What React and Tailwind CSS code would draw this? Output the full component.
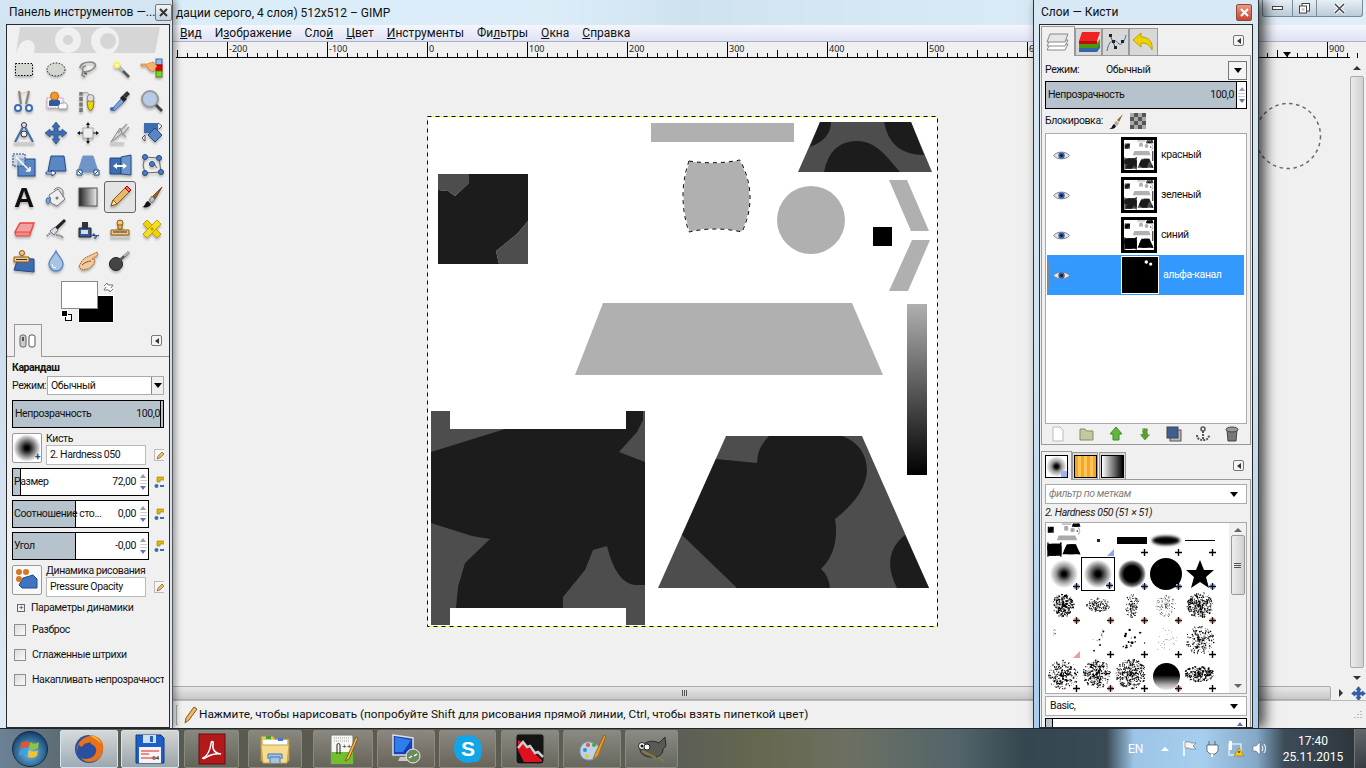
import React from 'react';

const BLUE = '#3d6cb0';
const BLUEL = '#7fa3d6';

// seeded noise for the brush previews
const scatter = (seed, n, cx, cy, rx, ry, maxR) => {
  let s = seed;
  const rnd = () => { s = (s * 9301 + 49297) % 233280; return s / 233280; };
  const out = [];
  for (let i = 0; i < n; i++) {
    const a = rnd() * Math.PI * 2;
    const d = Math.pow(rnd(), 0.7);
    out.push([cx + Math.cos(a) * d * rx, cy + Math.sin(a) * d * ry, 0.3 + rnd() * maxR]);
  }
  return out;
};

const Tool = ({ children }) => <svg width="24" height="24" viewBox="0 0 24 24" className="drop-shadow-[0_2px_1px_rgba(0,0,0,0.25)]">{children}</svg>;

const toolIcons = [
  // row 1
  <Tool key="rect"><rect x="3.5" y="6.5" width="17" height="12" fill="#d3d7cf" stroke="#000" strokeDasharray="1.5 1.5" /></Tool>,
  <Tool key="ell"><ellipse cx="12" cy="12.5" rx="9" ry="6.5" fill="#d3d7cf" stroke="#111" strokeDasharray="1.5 1.5" /></Tool>,
  <Tool key="lasso"><path d="M4 11c0-4 5-6 10-6s7 3 4 6-9 5-11 3 0-5 3-5M7 14l-1 4 3 2" fill="none" stroke="#8a8a80" strokeWidth="1.6" /><path d="M8 16l3 1" stroke="#555" strokeWidth="1.5" /></Tool>,
  <Tool key="wand"><path d="M11 10l10 10" stroke="#555" strokeWidth="2.6" /><path d="M11 10l4 4" stroke="#bbb" strokeWidth="2.6" /><circle cx="9" cy="8" r="3.4" fill="#fcf05a" /><circle cx="9" cy="8" r="1.4" fill="#fff" /></Tool>,
  <Tool key="csel"><rect x="16" y="2" width="6" height="6" fill="#9db8dd" stroke={BLUE} /><rect x="16" y="8" width="6" height="6" fill="#e00" stroke="#900" /><rect x="16" y="14" width="6" height="6" fill="#7ed321" stroke="#4a8a10" /><path d="M1 7h6l6-2 4 4-4 6-5-3-1-3H1z" fill="#f6b26b" stroke="#d9730d" strokeDasharray="1 .6" /></Tool>,
  // row 2
  <Tool key="sc"><path d="M9 15L7 2M14 15l3-13" stroke="#888" strokeWidth="2.2" /><path d="M8 3l1 2 8-3" fill="none" stroke="#e89020" strokeDasharray="1 1" /><circle cx="6" cy="19" r="3" fill="#fff" stroke={BLUE} strokeWidth="2" /><circle cx="17" cy="19" r="3" fill="#fff" stroke={BLUE} strokeWidth="2" /></Tool>,
  <Tool key="fg"><path d="M3 9h16v10H3z" fill="#f3f3ef" stroke="#c98acb" strokeDasharray="1.4 .8" /><path d="M5 17v-5l3-2h5l3 2v5z" fill="#2f5a9c" /><circle cx="10.5" cy="7" r="4" fill="#ee9a33" stroke="#c46f10" /><path d="M15 20a4 4 0 014-6 3 3 0 014 4v2z" fill="#fff" stroke="#999" /></Tool>,
  <Tool key="path"><path d="M5 23V3" stroke="#777" strokeWidth="3.5" strokeDasharray="4 1.5" /><path d="M5 5c6-3 9-1 9 5" fill="none" stroke="#888" /><path d="M11 12h7l-1 7-2.500 3-2.500-3z" fill="#edd400" stroke="#8f7b00" /><circle cx="14.500" cy="9" r="3.500" fill="#ddd" stroke="#888" /></Tool>,
  <Tool key="pick"><path d="M4 20l9-10 3 3-10 9z" fill={BLUEL} stroke={BLUE} /><path d="M12 9l3-3 4 4-3 3z" fill="#222" /><path d="M15 6l4-4 3 3-4 4z" fill="#333" /><circle cx="4" cy="20" r="2" fill={BLUE} /></Tool>,
  <Tool key="zoom"><circle cx="10" cy="10" r="8" fill="#b6cbe6" stroke="#999" strokeWidth="2" /><path d="M16 16l6 6" stroke="#444" strokeWidth="3" /></Tool>,
  // row 3
  <Tool key="meas"><circle cx="12" cy="4" r="2.500" fill="none" stroke="#333" /><path d="M11 6L3 21M13 6l8 15" stroke={BLUE} strokeWidth="2" /><circle cx="12" cy="13" r="3" fill="#eee" stroke="#333" /><path d="M2 22h20" stroke="#ccc" strokeWidth="2" /></Tool>,
  <Tool key="move"><path d="M12 1l4 5h-2v4h4V8l5 4-5 4v-2h-4v4h2l-4 5-4-5h2v-4H6v2l-5-4 5-4v2h4V6H8z" fill="#3d6cb0" stroke="#204a87" strokeWidth=".7" /></Tool>,
  <Tool key="align"><rect x="7" y="7" width="10" height="10" fill="#eee" stroke="#aaa" /><path d="M12 1l2 3h-4zM12 23l-2-3h4zM1 12l3-2v4zM23 12l-3 2v-4z" fill="#111" /><path d="M12 4v3M12 17v3M4 12h3M17 12h3" stroke="#111" /></Tool>,
  <Tool key="crop"><path d="M3 21l9-14 2 5z" fill="#ddd" stroke="#888" /><path d="M10 12l9-9M14 14l7-8M14 12l4 4" stroke="#9a9a9a" strokeWidth="1.4" /><path d="M2 22h14" stroke="#ccc" strokeWidth="2" /></Tool>,
  <Tool key="rot"><rect x="4" y="2" width="14" height="10" fill="#3d6cb0" /><path d="M8 14l7-7 7 7-7 7z" fill="#5b86c4" stroke="#204a87" /><path d="M18 2l4 3-3 3M2 17l3-3v6z" fill="#fff" stroke="#555" /></Tool>,
  // row 4
  <Tool key="scale"><rect x="6" y="6" width="17" height="17" fill="#5b86c4" stroke="#204a87" /><rect x="1" y="1" width="12" height="12" fill="#cfdcee" fillOpacity=".55" stroke="#204a87" strokeDasharray="2 1" /><path d="M4 4l14 14M18 18v-4M18 18h-4" stroke="#fff" strokeWidth="1.6" /></Tool>,
  <Tool key="shear"><path d="M7 3h13l2 15H4z" fill="#5b86c4" stroke="#204a87" /><path d="M2 19h6v-2l4 3-4 3v-2H2z" fill="#fff" stroke="#204a87" /></Tool>,
  <Tool key="persp"><path d="M7 3h10l5 16H2z" fill="#6f94c8" stroke="#6f94c8" /><path d="M1 17h5v5H1zM18 17h5v5h-5z" fill="#fff" stroke="#204a87" /><path d="M2 18l3 3M22 18l-3 3" stroke="#204a87" /></Tool>,
  <Tool key="flip"><path d="M2 5h11v16H2z" fill="#3d6cb0" stroke="#204a87" /><path d="M13 4l10-2v20l-10-1z" fill="#6f94c8" stroke="#204a87" /><path d="M5 13l4-3v2h6v-2l4 3-4 3v-2H9v2z" fill="#fff" /></Tool>,
  <Tool key="cage"><path d="M5 4l14 1 2 14-16 1-2-8z" fill="none" stroke="#666" /><path d="M10 12l4-2 3 5" fill="none" stroke="#666" /><g fill="#4d7cc0" stroke="#204a87"><circle cx="5" cy="4" r="2.500" /><circle cx="19" cy="5" r="2.500" /><circle cx="21" cy="19" r="2.500" /><circle cx="5" cy="20" r="2.500" /><circle cx="12" cy="11" r="2.500" /></g></Tool>,
  // row 5
  <svg key="txt" width="32" height="32" viewBox="0 0 32 32" className="drop-shadow-[0_2px_1px_rgba(0,0,0,0.25)]"><text x="16" y="26" textAnchor="middle" fontFamily="Liberation Sans" fontWeight="700" fontSize="28" fill="#111">A</text></svg>,
  <Tool key="bucket"><path d="M5 10l9-6 7 10-8 7-6-3z" fill="#eee" stroke="#777" /><path d="M3 13c-2 3 0 6 1 6 2 0 1-4 3-6z" fill="#7fa3d6" stroke={BLUE} /><path d="M10 5a5 5 0 019 1v6" fill="none" stroke="#777" /><circle cx="13" cy="13" r="1.500" fill="#777" /></Tool>,
  <Tool key="blend"><defs><linearGradient id="blendg"><stop offset="0" stopColor="#222" /><stop offset="1" stopColor="#eee" /></linearGradient></defs><rect x="3" y="3" width="18" height="18" fill="url(#blendg)" stroke="#555" /></Tool>,
  <Tool key="pencil"><path d="M3 21l2-6L17 3l4 4L9 19z" fill="#e9b96e" stroke="#8f5902" /><path d="M3 21l2-6 4 4z" fill="#f5e3c0" stroke="#8f5902" /><path d="M17 3l4 4 2-2-4-4z" fill="#ef6d6d" stroke="#a40000" /></Tool>,
  <Tool key="brush"><path d="M2 22c3 0 3-5 6-6l3 3c-1 3-5 4-9 3z" fill="#111" /><path d="M9 15l3-4 3 3-3 4z" fill="#bbb" stroke="#777" /><path d="M13 11l9-9-7 12z" fill="#a0622a" stroke="#7a4a1a" /></Tool>,
  // row 6
  <Tool key="erase"><path d="M3 15L8 6h14l-4 11H4z" fill="#f2a0a0" stroke="#ef4444" strokeWidth="1.400" /><path d="M3 15h15v4H4z" fill="#ee8a8a" stroke="#ef4444" /></Tool>,
  <Tool key="air"><path d="M8 13L20 2l2 2L11 15z" fill="#222" /><path d="M6 14l5-4 3 3-4 5z" fill="#ddd" stroke="#777" /><path d="M12 18c4 0 6 1 7 3" fill="none" stroke="#999" strokeWidth="2" /><path d="M3 19l4-4" stroke="#5b86c4" strokeWidth="2" strokeDasharray="1.500 1" /></Tool>,
  <Tool key="ink"><path d="M3 11h12v9H3z" fill="#2f5a9c" stroke="#222" /><rect x="6" y="5" width="6" height="6" fill="#333" /><rect x="5" y="13" width="7" height="4" fill="#ddd" /><path d="M15 19l3-2 2 3 3-2M18 21h3" stroke="#3d6cb0" strokeWidth="1.500" strokeDasharray="2 1" /></Tool>,
  <Tool key="clone"><circle cx="12" cy="6" r="3" fill="#f0c98a" stroke="#8f5902" /><rect x="10" y="8" width="4" height="4" fill="#e9b96e" stroke="#8f5902" /><path d="M3 13h18v5H3z" fill="#f0c98a" stroke="#8f5902" /><path d="M5 15h14" stroke="#333" /><path d="M2 20h20" stroke="#ccc" strokeWidth="2" /></Tool>,
  <Tool key="heal"><path d="M3 7l4-4 14 14-4 4z" fill="#edd400" stroke="#c4a000" /><path d="M21 7l-4-4L3 17l4 4z" fill="#f5dd20" stroke="#c4a000" /><path d="M10 12l2-2 2 2-2 2z" fill="#c4a000" /></Tool>,
  // row 7
  <Tool key="pclone"><path d="M6 9l16 1v13L2 21z" fill="#3d6cb0" stroke="#204a87" /><circle cx="10" cy="4" r="2.500" fill="#f0c98a" stroke="#8f5902" /><path d="M2 8h15v5H2z" fill="#f0c98a" stroke="#8f5902" /><path d="M4 10.500h11" stroke="#333" /></Tool>,
  <Tool key="drop"><path d="M12 2c2 5 7 8 7 13a7 7 0 01-14 0c0-5 5-8 7-13z" fill="#a9c3e4" stroke="#5b86c4" strokeWidth="1.300" /><path d="M8 15a4 4 0 004 4" stroke="#fff" fill="none" /></Tool>,
  <Tool key="smudge"><path d="M3 18c2-6 5-9 8-10l10-5 1 3-6 4 3 1c0 3-3 7-7 9l-6 1z" fill="#edc9a4" stroke="#b5651d" strokeDasharray="2 .6" /><path d="M6 16c2-2 6-4 9-4" stroke="#8f5902" fill="none" /></Tool>,
  <Tool key="dodge"><circle cx="8" cy="15" r="6.500" fill="#444" stroke="#222" /><path d="M12 11l9-8" stroke="#555" strokeWidth="2.500" /><path d="M16 7l5-4" stroke="#bbb" strokeWidth="2" /></Tool>,
];

// outline of the floating selection, used for the fill and the marching ants
const BLOB = 'M689 161Q715 165 740 160Q759 196 742 232Q715 226 689 232Q677 196 689 161Z';

// the image itself; coordinates are screen pixels of the reference
function Artwork({ dark = '#1c1c1c', mid = '#4d4d4d', light = '#b0b0b0' }) {
  return (
    <>
      <rect x="651" y="123" width="143" height="19" fill={light} />
      <path d="M820 122H911L932 172H798Z" fill={mid} />
      <path d="M820 122H831Q831 139 810 147ZM884 122H911L924 155Q890 155 884 122ZM824 172Q830 141 857 141Q873 141 887 157L900 172Z" fill={dark} />
      <path d="M438 174H469V183L455 196L448 191L438 190ZM528 221V264H499L496 251L517 234Z" fill={mid} />
      <path d="M469 174H528V221L517 234L496 251L499 264H438V190L448 191L455 196L469 183Z" fill={dark} />
      <circle cx="811" cy="220" r="34" fill={light} />
      <path d={BLOB} fill={light} />
      <rect x="873" y="227" width="19" height="19" fill="#000" />
      <path d="M889 180H907L929 231H911ZM912 240H930L908 291H889Z" fill={light} />
      <path d="M603 303H852L883 375H575Z" fill={light} />
      <path d="M431 411H450V429H626V411H645V625H626V608H450V625H431Z" fill={mid} />
      <path d="M431 452L505 429H626V411H643V420L637 432L619 452L645 462V585H635Q616 583 607 546L593 550L585 570L563 597V608H456L458 587L465 563L490 539L472 536L431 523Z" fill={dark} />
      <path d="M726 436H862L929 588H658Z" fill={mid} />
      <path d="M769 436Q757 448 757 463L716 459L682 535L737 588H830Q829 576 821 569Q840 550 835 519Q866 495 867 470Q866 445 842 436ZM905 535Q880 555 897 588H929Z" fill={dark} />
    </>
  );
}

function Gradient() {
  return (
    <>
      <defs>
        <linearGradient id="ramp" x1="0" y1="0" x2="0" y2="1">
          <stop offset="0" stopColor="#b0b0b0" />
          <stop offset="1" stopColor="#000" />
        </linearGradient>
      </defs>
      <rect x="907" y="304" width="20" height="171" fill="url(#ramp)" />
    </>
  );
}

const Thumb = ({ dark, mid, light, alpha }) => (
  <svg width="36" height="36" viewBox="427 116 511 512" className="block border-[3px] border-black bg-white shrink-0">
    {alpha ? (
      <>
        <rect x="427" y="116" width="511" height="512" fill="#000" />
        <circle cx="790" cy="150" r="30" fill="#fff" />
        <circle cx="865" cy="185" r="28" fill="#fff" />
      </>
    ) : (
      <>
        <Artwork dark={dark} mid={mid} light={light} />
        <rect x="907" y="304" width="20" height="171" fill="#333" />
      </>
    )}
  </svg>
);

const Eye = () => (
  <svg width="17" height="11" viewBox="0 0 17 11">
    <path d="M.5 5.500C4 1 13 1 16.500 5.500 13 10 4 10 .5 5.500z" fill="#e8e8e8" stroke="#888" />
    <circle cx="8.500" cy="5.500" r="3.200" fill="#2f5fa8" />
    <circle cx="8.500" cy="5.500" r="1.300" fill="#111" />
  </svg>
);

const Spin = () => (
  <div className="w-[8px] h-full flex flex-col items-center justify-center gap-[2px]">
    <span className="w-0 h-0 border-x-[3px] border-x-transparent border-b-[4px] border-b-[#8f9bb8]" />
    <span className="w-[7px] h-px bg-[#ccc]" />
    <span className="w-[7px] h-px bg-[#ccc]" />
    <span className="w-0 h-0 border-x-[3px] border-x-transparent border-t-[4px] border-t-[#5f72b0]" />
  </div>
);

const Caret = () => <span className="w-0 h-0 border-x-[4px] border-x-transparent border-t-[5px] border-t-black" />;

const LinkIcon = () => (
  <svg width="12" height="14" viewBox="0 0 12 14" className="shrink-0">
    <path d="M3 5V2h8v3H6v2H3z" fill="#e4b800" stroke="#8f7b00" strokeWidth=".6" />
    <circle cx="2.500" cy="11" r="2" fill="#3d6cb0" />
    <rect x="6" y="10" width="5" height="2" fill="#3d6cb0" />
  </svg>
);

const EditBtn = () => (
  <div className="w-[12px] h-[12px] border border-[#bbb] bg-[#f6f6f6] flex items-center justify-center shrink-0">
    <svg width="9" height="9" viewBox="0 0 9 9"><path d="M1 8l1-3 4-4 2 2-4 4z" fill="#e9b96e" stroke="#6b4a10" strokeWidth=".6" /></svg>
  </div>
);

const TabMenu = () => (
  <div className="w-[11px] h-[11px] rounded-[2px] border border-[#777] bg-[#f4f4f4] flex items-center justify-center">
    <span className="w-0 h-0 border-y-[3px] border-y-transparent border-r-[4px] border-r-[#333]" />
  </div>
);

function ToolSlider({ label, value, fill }) {
  return (
    <div className="flex items-center gap-[5px]">
      <div className="relative w-[137px] h-[28px] border border-black bg-white flex items-center pr-[1px] shrink-0">
        <div className={`absolute left-0 top-0 bottom-0 bg-[#b6c2cc] border-r border-black ${fill}`} />
        <span className="relative flex-1 pl-[1px] text-[#111] whitespace-nowrap">{label}</span>
        <span className="relative text-[#111] pr-[3px]">{value}</span>
        <span className="relative h-full flex items-center"><Spin /></span>
      </div>
      <LinkIcon />
    </div>
  );
}

const Check = ({ label }) => (
  <div className="flex items-center gap-[6px] h-[25px] text-[#111] whitespace-nowrap">
    <span className="w-[12px] h-[12px] border border-[#8e8f8f] bg-[linear-gradient(135deg,#dcdcdc,#fafafa)] shrink-0" />
    {label}
  </div>
);

function Toolbox() {
  return (
    <div className="absolute left-0 top-0 w-[173px] h-[728px] flex flex-col pl-[6px] pr-[2px] bg-[linear-gradient(180deg,#d3e4f2,#cbdcec_40%,#dfeaf4)] border-r border-[#555] shadow-[3px_0_6px_rgba(0,0,0,0.35)] z-10">
      <div className="h-[24px] shrink-0 flex items-center justify-between pl-[3px] pr-[1px]">
        <span className="text-[12px] text-[#111] whitespace-nowrap">Панель инструментов —...</span>
        <span className="w-[17px] h-[17px] border border-[#777] rounded-[2px] bg-[linear-gradient(180deg,#f0f4f8,#c8d0d8)] flex items-center justify-center shrink-0">
          <svg width="9" height="9" viewBox="0 0 9 9"><path d="M1 1l7 7M8 1L1 8" stroke="#333" strokeWidth="2" /></svg>
        </span>
      </div>
      <div className="flex-1 border border-[#2a2a2a] bg-[#f0f0f0] flex flex-col overflow-hidden text-[#111] text-[10.5px] tracking-[-0.4px]">
        <svg width="162" height="27" viewBox="0 0 162 27" className="shrink-0 mt-[1px]">
          <path d="M13 1H153L148 27H9Z" fill="#d6d6d6" />
          <path d="M9 27Q13 13 22 14Q30 16 27 27Z" fill="#f0f0f0" />
          <circle cx="61" cy="14" r="13" fill="#f0f0f0" />
          <circle cx="61" cy="14" r="5" fill="#d6d6d6" />
          <circle cx="98" cy="15" r="14" fill="#f0f0f0" />
          <circle cx="101" cy="15" r="8" fill="#d6d6d6" />
        </svg>
        <div className="grid grid-cols-[repeat(5,32px)] auto-rows-[32px] pl-[1px] shrink-0">
          {toolIcons.map((icon, i) => (
            <div key={i} className={`flex items-center justify-center ${i === 23 ? 'bg-[#e4e4e4] border border-[#666] rounded-[3px]' : ''}`}>{icon}</div>
          ))}
        </div>
        {/* colour swatches */}
        <div className="h-[42px] mt-[4px] shrink-0 flex justify-center">
          <div className="relative w-[56px] h-[42px] ml-[1px]">
            <div className="absolute left-[17px] top-[14px] w-[36px] h-[28px] bg-black border border-white" />
            <div className="absolute left-0 top-0 w-[37px] h-[28px] bg-white border border-[#888]" />
            <div className="absolute left-[4px] top-[33px] w-[7px] h-[7px] bg-white border border-black" />
            <div className="absolute left-0 top-[29px] w-[7px] h-[7px] bg-black border border-white" />
            <svg width="13" height="13" viewBox="0 0 13 13" className="absolute left-[41px] top-0"><path d="M2 5l3-3 1 2h5l-2 3M11 8l-3 3-1-2H2l2-3" fill="#fff" stroke="#777" /></svg>
          </div>
        </div>
        {/* tool options */}
        <div className="flex items-end justify-between h-[33px] shrink-0 pr-[7px] relative">
          <div className="ml-[7px] w-[28px] h-[33px] bg-[#f0f0f0] border border-[#999] border-b-0 flex items-center justify-center relative top-px">
            <svg width="18" height="16" viewBox="0 0 18 16"><rect x="1" y="2" width="6" height="12" rx="2" fill="#ccc" stroke="#666" /><rect x="10" y="2" width="6" height="12" rx="2" fill="#fff" stroke="#555" /><rect x="3" y="4" width="2" height="4" fill="#555" /></svg>
          </div>
          <div className="mb-[10px]"><TabMenu /></div>
        </div>
        <div className="flex-1 border-t border-[#999] pl-[5px]">
          <div className="w-[152px] h-full overflow-hidden">
            <div className="font-bold leading-[15px] mt-[3px] h-[16px]">Карандаш</div>
            <div className="flex items-center h-[19px]">
              <span className="w-[35px] shrink-0 whitespace-nowrap">Режим:</span>
              <div className="flex-1 flex h-[19px] border border-[#aaa] bg-white items-center pl-[3px]">
                <span className="flex-1">Обычный</span>
                <span className="w-[12px] h-full border-l border-[#888] bg-[#f0f0f0] flex items-center justify-center"><Caret /></span>
              </div>
            </div>
            <div className="mt-[5px] h-[28px] border border-black bg-[#b6c2cc] flex items-center px-[2px] relative">
              <span className="flex-1">Непрозрачность</span>
              <span className="pr-[1px]">100,0</span>
              <span className="absolute right-[2px] top-0 bottom-0 w-px bg-black" />
            </div>
            <div className="flex mt-[5px] h-[31px] gap-[4px]">
              <div className="relative w-[30px] h-[30px] border border-[#999] rounded-[2px] bg-[radial-gradient(circle,#000_10%,#fff_70%)] shrink-0">
                <span className="absolute right-[1px] bottom-[1px] text-[10px] leading-[8px] font-bold text-[#2a3f9c]">+</span>
              </div>
              <div className="flex flex-col flex-1">
                <span className="leading-[11px] mb-[1px]">Кисть</span>
                <div className="flex items-center gap-[8px]">
                  <div className="w-[100px] h-[20px] border border-[#bbb] bg-white pl-[3px] flex items-center">2. Hardness 050</div>
                  <EditBtn />
                </div>
              </div>
            </div>
            <div className="flex flex-col gap-[4px] mt-[4px]">
              <ToolSlider label="Размер" value="72,00" fill="w-[8px]" />
              <ToolSlider label="Соотношение сто..." value="0,00" fill="w-[63px]" />
              <ToolSlider label="Угол" value="-0,00" fill="w-[63px]" />
            </div>
            <div className="flex mt-[5px] h-[31px] gap-[4px]">
              <div className="w-[30px] h-[30px] border border-[#999] rounded-[2px] bg-[#f8f8f8] shrink-0 flex items-center justify-center">
                <svg width="26" height="26" viewBox="0 0 26 26"><path d="M9 11l10-3 4 4v9H8l-3-3z" fill="#3f74c0" stroke="#204a87" /><g fill="#d5781f"><circle cx="5" cy="5" r="3" /><circle cx="12" cy="5" r="3" /><circle cx="5" cy="12" r="3" /></g></svg>
              </div>
              <div className="flex flex-col flex-1">
                <span className="leading-[11px] mb-[1px] whitespace-nowrap">Динамика рисования</span>
                <div className="flex items-center gap-[8px]">
                  <div className="w-[100px] h-[20px] border border-[#bbb] bg-white pl-[3px] flex items-center">Pressure Opacity</div>
                  <EditBtn />
                </div>
              </div>
            </div>
            <div className="flex items-center gap-[6px] mt-[4px] ml-[5px] h-[16px] whitespace-nowrap">
              <span className="w-[8px] h-[8px] border border-[#666] flex items-center justify-center text-[8px] leading-[6px] text-[#2a3f9c]">+</span>
              Параметры динамики
            </div>
            <div className="mt-[1px] ml-[2px]">
              <Check label="Разброс" />
              <Check label="Сглаженные штрихи" />
              <Check label="Накапливать непрозрачность" />
            </div>
          </div>
        </div>
      </div>
    </div>
  );
}

function Corner({ mark }) {
  if (!mark) return null;
  if (mark === 'tb' || mark === 'tr') {
    return <svg width="7" height="7" viewBox="0 0 7 7" className="absolute right-[1px] bottom-[1px]"><path d="M7 0v7H0z" fill={mark === 'tb' ? '#88a6e8' : '#f39a9a'} /></svg>;
  }
  return (
    <svg width="7" height="7" viewBox="0 0 7 7" className="absolute right-[1px] bottom-[1px]">
      {mark !== 'k' && <rect x="1" y="1" width="5" height="5" fill={mark === 'b' ? '#9db4f0' : '#f6a8a8'} />}
      <path d="M3.500 0v7M0 3.500h7" stroke={mark === 'k' ? '#000' : '#111'} strokeWidth="1.400" />
    </svg>
  );
}

const Noise = ({ dots }) => (
  <svg width="34" height="34" viewBox="0 0 34 34">
    {dots.map((d, i) => <circle key={i} cx={d[0]} cy={d[1]} r={d[2]} fill="#000" />)}
  </svg>
);

const brushCells = [
  { mark: null, node: <svg width="34" height="34" viewBox="427 116 511 512"><Artwork dark="#000" mid="#000" light="#aaa" /></svg> },
  { mark: 'tb', node: <span className="w-[3px] h-[3px] bg-[#222]" /> },
  { mark: 'k', node: <span className="w-[30px] h-[7px] bg-black blur-[0.5px]" /> },
  { mark: 'k', node: <span className="w-[28px] h-[9px] rounded-[50%] bg-black blur-[1.5px]" /> },
  { mark: 'k', node: <span className="w-[30px] h-px bg-black" /> },
  { mark: 'b', node: <span className="w-[28px] h-[28px] rounded-full bg-[radial-gradient(circle,#000_10%,#999_40%,#fff_72%)]" /> },
  { mark: 'b', sel: true, node: <span className="w-[28px] h-[28px] rounded-full bg-[radial-gradient(circle,#000_12%,#888_45%,#fff_72%)]" /> },
  { mark: 'b', node: <span className="w-[28px] h-[28px] rounded-full bg-[radial-gradient(circle,#000_40%,#666_58%,#fff_72%)]" /> },
  { mark: 'b', node: <span className="w-[32px] h-[32px] rounded-full bg-black" /> },
  { mark: 'b', node: <svg width="30" height="30" viewBox="0 0 30 30"><path d="M15 1l4 10h10l-8 7 3 11-9-6-9 6 3-11-8-7h10z" fill="#000" /></svg> },
  { mark: 'r', node: <Noise dots={scatter(11, 260, 16, 14, 11, 12, 0.55)} /> },
  { mark: 'r', node: <Noise dots={scatter(23, 150, 17, 14, 12, 7, 0.4)} /> },
  { mark: 'r', node: <Noise dots={scatter(37, 130, 17, 15, 7, 12, 0.35)} /> },
  { mark: 'r', node: <Noise dots={scatter(51, 140, 17, 15, 10, 11, 0.15)} /> },
  { mark: 'r', node: <Noise dots={scatter(73, 330, 17, 14, 13, 13, 0.5)} /> },
  { mark: 'tr', node: <Noise dots={scatter(5, 8, 8, 8, 2, 4, 0.2)} /> },
  { mark: 'k', node: <Noise dots={scatter(91, 10, 17, 15, 12, 12, 0.7)} /> },
  { mark: 'k', node: <Noise dots={scatter(17, 22, 17, 15, 13, 12, 1)} /> },
  { mark: 'k', node: <Noise dots={scatter(29, 26, 17, 15, 13, 13, 0.1)} /> },
  { mark: 'k', node: <Noise dots={scatter(61, 220, 17, 15, 14, 14, 0.5)} /> },
  { mark: 'k', node: <Noise dots={scatter(83, 230, 16, 16, 15, 15, 0.6)} /> },
  { mark: 'r', node: <Noise dots={scatter(97, 300, 16, 15, 14, 14, 0.55)} /> },
  { mark: 'k', node: <Noise dots={scatter(113, 340, 16, 15, 15, 15, 0.5)} /> },
  { mark: 'r', node: <span className="w-[27px] h-[27px] rounded-full bg-[linear-gradient(180deg,#000_45%,#aaa_80%,#eee)]" /> },
  { mark: 'k', node: <Noise dots={scatter(131, 230, 16, 15, 15, 8, 0.6)} /> },
];

function Dock() {
  return (
    <div className="absolute left-[1033px] top-0 w-[226px] h-[728px] flex flex-col pl-[5px] pr-[5px] bg-[linear-gradient(180deg,#d8e8f4,#d0e2f1_50%,#a9cdef)] border-x border-[#333] shadow-[6px_0_12px_rgba(0,0,0,0.7)] z-10">
      <div className="h-[24px] shrink-0 flex items-center justify-between pl-[2px] pr-[1px]">
        <span className="text-[12px] text-[#111]">Слои — Кисти</span>
        <span className="w-[16px] h-[17px] border border-[#8a4a3a] rounded-[2px] bg-[linear-gradient(180deg,#e99a85,#c8452f)] flex items-center justify-center">
          <svg width="9" height="9" viewBox="0 0 9 9"><path d="M1 1l7 7M8 1L1 8" stroke="#fff" strokeWidth="2" /></svg>
        </span>
      </div>
      <div className="flex-1 border border-[#2a2a2a] bg-[#f0f0f0] flex flex-col overflow-hidden text-[10.5px] tracking-[-0.4px] text-[#111]">
        {/* top notebook */}
        <div className="h-[30px] shrink-0 flex items-end pl-[1px] pr-[8px]">
          <div className="w-[34px] h-[30px] border border-[#999] border-b-0 bg-[#f0f0f0] relative top-px flex items-center justify-center">
            <svg width="24" height="22" viewBox="0 0 24 22">
              <path d="M4 13L1 19h18l3-6z" fill="#fff" stroke="#888" /><path d="M4 9L1 15h18l3-6z" fill="#fff" stroke="#888" /><path d="M4 3L1 11h18l3-8z" fill="#e6e6e6" stroke="#888" />
            </svg>
          </div>
          <div className="w-[27px] h-[27px] border border-[#999] border-b-0 bg-[#d8d8d8] flex items-center justify-center">
            <svg width="24" height="22" viewBox="0 0 24 22"><path d="M2 16h18l3-4v5l-3 4H2z" fill="#3465a4" /><path d="M2 12h18l3-4v5l-3 4H2z" fill="#4e9a06" /><path d="M5 1h18l-3 9H2z" fill="#e22" /><path d="M2 10h18v3H2z" fill="#b80f0f" /></svg>
          </div>
          <div className="w-[27px] h-[27px] border border-[#999] border-b-0 bg-[#d8d8d8] flex items-center justify-center">
            <svg width="24" height="23" viewBox="0 0 24 23"><path d="M3 20C5 8 11 8 14 12s7-2 8-8" fill="none" stroke="#3d6cb0" /><path d="M6 4l6 14" stroke="#555" /><g fill="#222"><rect x="5" y="3" width="3" height="3" /><rect x="10" y="15" width="3" height="3" /><rect x="17" y="9" width="3" height="3" /><rect x="8" y="9" width="3" height="3" /></g></svg>
          </div>
          <div className="w-[29px] h-[27px] border border-[#999] border-b-0 bg-[#d8d8d8] flex items-center justify-center">
            <svg width="24" height="20" viewBox="0 0 24 20"><path d="M9 1L1 8l8 7v-4c6 0 9 2 11 7 1-8-3-13-11-13z" fill="#edd400" stroke="#c4a000" /></svg>
          </div>
          <div className="flex-1 flex justify-end mb-[9px]"><TabMenu /></div>
        </div>
        <div className="h-[390px] shrink-0 border border-[#999] mx-px px-[3px] flex flex-col">
          <div className="flex items-center h-[25px] pt-[3px] shrink-0">
            <span className="w-[61px]">Режим:</span>
            <span className="flex-1">Обычный</span>
            <span className="w-[19px] h-[19px] border border-[#777] bg-[#f4f4f4] flex items-center justify-center"><Caret /></span>
          </div>
          <div className="h-[28px] shrink-0 border border-black flex items-center bg-white">
            <div className="flex-1 h-full bg-[#b6c2cc] border-r border-black flex items-center justify-between px-[2px]">
              <span>Непрозрачность</span><span>100,0</span>
            </div>
            <span className="w-[9px] h-full flex justify-center"><Spin /></span>
          </div>
          <div className="h-[24px] shrink-0 flex items-center gap-[5px]">
            <span>Блокировка:</span>
            <svg width="16" height="17" viewBox="0 0 16 17"><path d="M1 16c3 0 3-4 5-5l2 2c-1 3-4 3-7 3z" fill="#111" /><path d="M6 10l2-2 3 2-2 3z" fill="#aaa" /><path d="M9 7l6-6-4 8z" fill="#a0622a" /></svg>
            <span className="w-[16px] h-[16px] ml-[1px] bg-[repeating-conic-gradient(#555_0_25%,#aaa_0_50%)] bg-[length:8px_8px]" />
          </div>
          <div className="h-[291px] shrink-0 border border-[#aaa] bg-white p-px flex flex-col">
            {[
              { name: 'красный', dark: '#1c1c1c', mid: '#4d4d4d' },
              { name: 'зеленый', dark: '#1c1c1c', mid: '#4d4d4d' },
              { name: 'синий', dark: '#000', mid: '#000' },
              { name: 'альфа-канал', alpha: true },
            ].map((l) => (
              <div key={l.name} className={`h-[40px] shrink-0 mr-px flex items-center ${l.alpha ? 'bg-[#3399ff] text-white' : ''}`}>
                <span className="w-[26px] h-[27px] ml-px flex items-center justify-center shrink-0 relative">
                  <Eye />
                  {l.alpha && <span className="absolute inset-0 border border-dotted border-[#d0801a]" />}
                </span>
                <span className="w-[47px] shrink-0" />
                {l.alpha ? <span className="border border-white bg-black shrink-0"><Thumb alpha /></span> : <span className="shrink-0"><Thumb dark={l.dark} mid={l.mid} /></span>}
                <span className="ml-[4px]">{l.name}</span>
              </div>
            ))}
          </div>
          <div className="flex-1 flex items-center pl-[5px] gap-[13px] pb-[1px]">
            <svg width="16" height="16" viewBox="0 0 16 16"><path d="M3 1h7l3 3v11H3z" fill="#fff" stroke="#bbb" /></svg>
            <svg width="16" height="16" viewBox="0 0 16 16"><path d="M1 14V3h5l2 2h6v9z" fill="#c4c7a0" stroke="#8a8c60" /></svg>
            <svg width="16" height="16" viewBox="0 0 16 16"><path d="M8 1l6 7h-3v6H5V8H2z" fill="#5fb83a" stroke="#3f8a20" /></svg>
            <svg width="16" height="16" viewBox="0 0 16 16"><path d="M8 15L2 8h3V2h6v6h3z" fill="#5f9a3a" stroke="#fff" strokeDasharray="2 1" /></svg>
            <svg width="16" height="16" viewBox="0 0 16 16"><rect x="4" y="4" width="11" height="11" fill="#bbb" stroke="#555" /><rect x="1" y="1" width="11" height="11" fill="#3f5f90" stroke="#444" /></svg>
            <svg width="16" height="16" viewBox="0 0 16 16"><circle cx="8" cy="3" r="2" fill="none" stroke="#555" strokeWidth="1.500" /><path d="M8 5v9M2 9c0 4 3 5 6 5s6-1 6-5" fill="none" stroke="#555" strokeWidth="2" strokeDasharray="2 1" /></svg>
            <svg width="16" height="16" viewBox="0 0 16 16"><path d="M3 4h10l-1 11H4z" fill="#777" stroke="#444" /><ellipse cx="8" cy="3.500" rx="6" ry="2.500" fill="#999" stroke="#444" /></svg>
          </div>
        </div>
        {/* bottom notebook */}
        <div className="h-[34px] shrink-0 flex items-end pl-[1px] pr-[8px]">
          <div className="w-[31px] h-[29px] border border-[#999] border-b-0 bg-[#f0f0f0] relative top-px flex items-center justify-center">
            <span className="relative w-[23px] h-[23px] border border-black bg-[radial-gradient(circle,#000_10%,#999_35%,#fff_70%)]">
              <span className="absolute right-0 bottom-0 w-[6px] h-[6px] bg-[#9db4f0]" />
            </span>
          </div>
          <div className="w-[26px] h-[27px] border border-[#999] border-b-0 bg-[#d8d8d8] flex items-center justify-center">
            <span className="w-[23px] h-[23px] border border-black bg-[repeating-linear-gradient(90deg,#f6a623_0_3px,#ffc65c_3px_6px)]" />
          </div>
          <div className="w-[27px] h-[27px] ml-px border border-[#999] border-b-0 bg-[#d8d8d8] flex items-center justify-center">
            <span className="w-[23px] h-[23px] border border-black bg-[linear-gradient(90deg,#fff,#000)]" />
          </div>
          <div className="flex-1 flex justify-end mb-[8px]"><TabMenu /></div>
        </div>
        <div className="flex-1 border border-[#999] border-b-0 mx-px px-[3px] pt-[4px] flex flex-col overflow-hidden">
          <div className="h-[20px] shrink-0 border border-[#aaa] bg-white flex items-center justify-between pl-[3px] pr-[8px] italic text-[#808080]">
            <span>фильтр по меткам</span><Caret />
          </div>
          <div className="h-[16px] mt-px shrink-0 italic flex items-center text-[#222]">2. Hardness 050 (51 × 51)</div>
          <div className="h-[172px] mt-[1px] shrink-0 border border-[#aaa] bg-white flex">
            <div className="w-[183px] grid grid-cols-[repeat(5,34px)] auto-rows-[34px] pl-[1px] overflow-hidden shrink-0">
              {brushCells.map((c, i) => (
                <div key={i} className={`relative flex items-center justify-center overflow-hidden ${c.sel ? 'border border-black' : ''}`}>
                  {c.node}
                  <Corner mark={c.mark} />
                </div>
              ))}
            </div>
            <div className="flex-1 flex flex-col items-center justify-between py-[5px] bg-[#f0f0f0]">
              <span className="w-0 h-0 border-x-[4px] border-x-transparent border-b-[4px] border-b-[#666]" />
              <div className="w-[14px] h-[60px] mt-[3px] mb-auto border border-[#999] rounded-[2px] bg-[linear-gradient(90deg,#eee,#d0d0d0)] flex flex-col items-center justify-center gap-px">
                <span className="w-[7px] h-px bg-[#555]" /><span className="w-[7px] h-px bg-[#555]" /><span className="w-[7px] h-px bg-[#555]" />
              </div>
              <span className="w-0 h-0 border-x-[4px] border-x-transparent border-t-[4px] border-t-[#666]" />
            </div>
          </div>
          <div className="h-[20px] mt-[2px] shrink-0 border border-[#aaa] bg-white flex items-center justify-between pl-[4px] pr-[8px]">
            <span>Basic,</span><Caret />
          </div>
          <div className="h-[14px] mt-[2px] shrink-0 border border-black bg-white flex justify-between">
            <span className="w-[7px] bg-[#b6c2cc] border-r border-black" />
            <span className="mr-[3px] mt-[3px] w-0 h-0 border-x-[3px] border-x-transparent border-b-[4px] border-b-[#5f72b0]" />
          </div>
        </div>
      </div>
    </div>
  );
}

const menuItems = [
  ['', 'В', 'ид'],
  ['И', 'з', 'ображение'],
  ['Сло', 'й', ''],
  ['', 'Ц', 'вет'],
  ['', 'И', 'нструменты'],
  ['Фи', 'л', 'ьтры'],
  ['', 'О', 'кна'],
  ['', 'С', 'правка'],
];

const rulerTicks = Array.from({ length: 120 }, (_, i) => 177 + i * 10);
const rulerLabels = [-200, -100, 0, 100, 200, 300, 400, 500, 600, 700, 800, 900];

function Ruler() {
  return (
    <svg width="1366" height="16" viewBox="0 0 1366 16" className="block shrink-0">
      {rulerTicks.map((x) => (
        <path key={x} d={`M${x + 0.5} ${(x - 427) % 100 === 0 ? 0 : (x - 427) % 50 === 0 ? 8 : 11}V16`} stroke="#000" />
      ))}
      <path d="M176 15.500H1350" stroke="#000" />
      {/* triangle that marks the pointer */}
      <path d="M1283 10h8l-4 5z" fill="#000" />
      {rulerLabels.map((n) => (
        <text key={n} x={427 + n + 2} y="10" fontFamily="Noto Sans" fontSize="9" fill="#222">{n}</text>
      ))}
    </svg>
  );
}

function MainWindow() {
  return (
    <div className="absolute inset-x-0 top-0 h-[728px] flex flex-col bg-[#f0f0f0]">
      <div className="h-[25px] shrink-0 pl-[176px] flex items-start pt-[4px] relative bg-[linear-gradient(90deg,#d8ecf8,#dcedf8_40%,#cfe3ef_50%,#d7e9f5_70%,#e0eef8)]">
        <span className="text-[12px] text-[#111] whitespace-nowrap">дации серого, 4 слоя) 512x512 – GIMP</span>
        <div className="absolute right-[3px] top-0 h-[17px] w-[101px] flex border border-t-0 border-[#7a8a98] rounded-b-[3px] bg-[linear-gradient(180deg,#e6eff6,#bccbd8)]">
          <span className="w-[30px] flex items-center justify-center border-r border-[#7a8a98]"><span className="w-[11px] h-[4px] border border-[#444] bg-white" /></span>
          <span className="w-[24px] flex items-center justify-center border-r border-[#7a8a98]">
            <svg width="11" height="11" viewBox="0 0 11 11"><rect x="3" y=".5" width="7.500" height="7.500" fill="#fff" stroke="#444" /><rect x=".5" y="3" width="7" height="7" fill="#fff" stroke="#444" /><rect x="2.500" y="5" width="3" height="3" fill="#ccc" /></svg>
          </span>
          <span className="flex-1 flex items-center justify-center">
            <svg width="13" height="11" viewBox="0 0 13 11"><path d="M2 1l9 9M11 1L2 10" stroke="#fff" strokeWidth="3.500" /><path d="M2 1l9 9M11 1L2 10" stroke="#445" strokeWidth="1.500" /></svg>
          </span>
        </div>
      </div>
      <div className="h-[17px] shrink-0 pl-[180px] flex items-center gap-[13px] border-b border-[#a9afc8] bg-[linear-gradient(180deg,#f4f6fc,#dfe3f4)] text-[12px] text-[#111]">
        {menuItems.map(([a, u, b]) => (
          <span key={a + u + b} className="whitespace-nowrap">{a}<span className="underline">{u}</span>{b}</span>
        ))}
      </div>
      <Ruler />
      <div className="h-[628px] shrink-0 flex">
        <svg viewBox="0 58 1350 628" width="1350" height="628" className="block shrink-0">
          <rect x="427" y="116" width="511" height="511" fill="#fff" />
          <Artwork />
          <Gradient />
          {/* selection outlines */}
          <path d={BLOB} fill="none" stroke="#fff" strokeWidth="1" />
          <path d={BLOB} fill="none" stroke="#000" strokeWidth="1" strokeDasharray="4 4" />
          <rect x="427.500" y="116.500" width="510" height="510" fill="none" stroke="#ffff00" strokeWidth="1" strokeDasharray="4 4" strokeDashoffset="4" />
          <rect x="427.500" y="116.500" width="510" height="510" fill="none" stroke="#000" strokeWidth="1" strokeDasharray="4 4" />
          <circle cx="1288" cy="136" r="32.500" fill="none" stroke="#6a6a6a" strokeWidth="1.500" strokeDasharray="3.500 3.500" />
        </svg>
        <div className="flex-1 flex flex-col items-center pt-[8px] pb-[6px] pr-[2px]">
          <span className="w-0 h-0 border-x-[4px] border-x-transparent border-b-[4px] border-b-[#333]" />
          <div className="w-[14px] flex-1 mt-[6px] mb-[8px] border border-[#aaa] rounded-[2px] bg-[linear-gradient(90deg,#eaeaea,#d0d0d0)]" />
          <span className="w-0 h-0 border-x-[4px] border-x-transparent border-t-[4px] border-t-[#333]" />
        </div>
      </div>
      <div className="h-[14px] shrink-0 flex">
        <div className="w-[1331px] border border-[#aaa] rounded-[2px] bg-[linear-gradient(180deg,#e6e6e6,#c8c8c8)] flex items-center justify-center">
          <span className="flex gap-px ml-[38px]"><span className="w-px h-[6px] bg-[#555]" /><span className="w-px h-[6px] bg-[#555]" /><span className="w-px h-[6px] bg-[#555]" /></span>
        </div>
        <div className="w-[19px] flex items-center justify-center">
          <span className="w-0 h-0 border-y-[4px] border-y-transparent border-l-[4px] border-l-[#333]" />
        </div>
        <div className="flex-1 flex items-center justify-center">
          <svg width="15" height="15" viewBox="0 0 24 24"><path d="M12 1l4 5h-2v4h4V8l5 4-5 4v-2h-4v4h2l-4 5-4-5h2v-4H6v2l-5-4 5-4v2h4V6H8z" fill="#2f5fa8" stroke="#204a87" /></svg>
        </div>
      </div>
      <div className="flex-1 flex items-center pl-[176px] border-t border-[#bbb] text-[11.8px] text-[#111]">
        <span className="w-[2px] h-[20px] border border-[#aaa] border-r-0" />
        <svg width="14" height="18" viewBox="0 0 14 18" className="ml-[6px] mr-[1px]"><path d="M1 17l1-5 8-11 3 2-8 11z" fill="#e9b96e" stroke="#8f5902" /></svg>
        <span className="whitespace-nowrap">Нажмите, чтобы нарисовать (попробуйте Shift для рисования прямой линии, Ctrl, чтобы взять пипеткой цвет)</span>
        <svg width="10" height="10" viewBox="0 0 10 10" className="ml-auto mr-[3px]"><path d="M8 1v1M5 4v1M8 4v1M2 7v1M5 7v1M8 7v1" stroke="#aaa" strokeWidth="1.500" /></svg>
      </div>
    </div>
  );
}

const TaskBtn = ({ width, active, children }) => (
  <div className={`h-[38px] mt-px rounded-[2px] border flex items-center justify-center shrink-0 ${width} ${active ? 'border-[#d5e5f0] bg-[linear-gradient(180deg,rgba(255,255,255,0.75),rgba(210,225,240,0.55))]' : 'border-[#8a8a80] bg-[linear-gradient(180deg,rgba(255,255,255,0.28),rgba(255,255,255,0.06))]'}`}>
    {children}
  </div>
);

function Taskbar() {
  return (
    <div className="absolute inset-x-0 bottom-0 h-[40px] flex items-start border-t border-[#20262c] bg-[linear-gradient(90deg,#6c8296,#5d6e76_4%,#575a50_10%,#5f5a4e_30%,#5c5f55_50%,#66684f_56%,#6d7062_62%,#53646a_70%,#364650_75%,#3a4a54_81%,#9cc4e6_83%,#a6ceee_88%,#84a8c6_92%,#3c4c58_94%,#2c3238)] z-20">
      <div className="w-[59px] h-full flex items-center justify-center shrink-0">
        <svg width="38" height="38" viewBox="0 0 38 38">
          <defs><radialGradient id="orb" cx=".5" cy=".6" r=".6"><stop offset="0" stopColor="#6fc4ef" /><stop offset="1" stopColor="#123a66" /></radialGradient></defs>
          <circle cx="19" cy="19" r="17.500" fill="url(#orb)" stroke="#1a2a3a" />
          <path d="M10 13c3-2 6-2 8-1l-1 6c-2-1-5-1-8 1z" fill="#e8532c" />
          <path d="M19 12c3 2 6 2 9 0l-1 6c-3 2-6 2-9 1z" fill="#8fc43c" />
          <path d="M9 20c3-2 5-2 8-1l-1 6c-2-1-5-1-8 1z" fill="#3ca2e8" />
          <path d="M18 20c3 2 6 2 9 0l-1 6c-3 2-6 2-9 1z" fill="#f5c22f" />
        </svg>
      </div>
      <div className="flex gap-[3px] pl-[1px]">
        <TaskBtn width="w-[58px]" active>
          <svg width="32" height="32" viewBox="0 0 32 32"><circle cx="16" cy="16" r="14" fill="#2a4f9c" /><path d="M4 20C2 8 14 0 24 4c6 3 8 10 5 17-3 8-15 11-21 4 5 2 13 1 15-6 1-4-2-7-5-8 0-2-2-2-3-1-3 0-5 2-6 4-1-1-3-1-3-3-1 3-2 5-2 9z" fill="#e8711a" /><path d="M16 2c6 0 12 5 12 9-4-5-8-6-12-9z" fill="#f7b733" /></svg>
        </TaskBtn>
        <TaskBtn width="w-[58px]" active>
          <svg width="32" height="32" viewBox="0 0 32 32"><path d="M2 2h25l3 3v25H2z" fill="#1f5ec8" stroke="#123a80" /><rect x="9" y="2" width="13" height="8" fill="#cfe0f5" /><rect x="16" y="3" width="3" height="6" fill="#1f5ec8" /><rect x="5" y="14" width="22" height="16" fill="#f4f4f4" /><path d="M7 18h18M7 21h8M7 25h18" stroke="#d22" /><text x="25" y="27" textAnchor="end" fontSize="6" fontFamily="Liberation Sans" fill="#222">64</text></svg>
        </TaskBtn>
        <TaskBtn width="w-[55px] ml-[2px]">
          <svg width="28" height="32" viewBox="0 0 28 32"><rect x="1" y="1" width="26" height="30" fill="#b3181a" stroke="#6e0d0e" /><path d="M5 25c4-2 7-8 8-14 0-4 3-3 2 1-1 5 3 9 8 9-5-1-12 1-16 4-2 1-3 0-2 0z" fill="none" stroke="#fff" strokeWidth="1.500" /></svg>
        </TaskBtn>
        <TaskBtn width="w-[54px] ml-[6px]">
          <svg width="32" height="32" viewBox="0 0 32 32"><path d="M2 10V3h12l2 3h14v22H2z" fill="#e5c56a" stroke="#a88c3a" /><rect x="4" y="7" width="24" height="6" fill="#fff" /><rect x="7" y="3" width="5" height="3" fill="#3ca23c" /><rect x="19" y="5" width="5" height="3" fill="#3c76e8" /><path d="M2 12h28l-2 18H4z" fill="#f5dc8e" stroke="#c7a54c" /><path d="M9 26v-5h14v5M11 30v-6h10v6" fill="#a3c4ea" stroke="#3e76b8" /></svg>
        </TaskBtn>
        <TaskBtn width="w-[60px] ml-[8px]">
          <svg width="32" height="34" viewBox="0 0 32 34"><path d="M4 3h22v29H4z" fill="#f7f7f2" stroke="#777" /><path d="M4 20h22v12H4z" fill="#6fbf2f" /><path d="M7 6h16M7 9h16" stroke="#999" strokeDasharray="1 1" /><path d="M10 22v-9a1.500 1.500 0 013 0v9" fill="none" stroke="#222" /><text x="15" y="17" fontSize="8" fontFamily="Liberation Sans" fill="#222">++</text><path d="M18 29l2-4L29 5l2 1-9 21z" fill="#e8c060" stroke="#8f5902" /></svg>
        </TaskBtn>
        <TaskBtn width="w-[58px] ml-[1px]">
          <svg width="32" height="32" viewBox="0 0 32 32"><path d="M3 2l20 3v17L3 22z" fill="#1440b8" stroke="#ddd" strokeWidth="1.500" /><path d="M5 4l16 3-8 12H5z" fill="#2f7fe8" /><path d="M10 24h10l3 4H8z" fill="#c8c8c8" /><circle cx="23" cy="23" r="7" fill="#6a8c5c" stroke="#eee" /><path d="M19 25l3-2M27 21l-3 2" stroke="#fff" strokeWidth="1.500" /></svg>
        </TaskBtn>
        <TaskBtn width="w-[57px] ml-[1px]">
          <svg width="32" height="32" viewBox="0 0 32 32"><circle cx="16" cy="16" r="14" fill="#12a5e8" /><circle cx="9" cy="9" r="6" fill="#12a5e8" /><circle cx="23" cy="23" r="6" fill="#12a5e8" /><text x="16" y="23" textAnchor="middle" fontSize="21" fontWeight="700" fontFamily="Liberation Sans" fill="#fff">S</text></svg>
        </TaskBtn>
        <TaskBtn width="w-[58px] ml-[2px]">
          <svg width="30" height="32" viewBox="0 0 30 32"><rect x="1" y="1" width="28" height="30" rx="3" fill="#141414" stroke="#777" /><path d="M3 17V7l6 3 6 6 4 4 8 7v2H9z" fill="#e01020" /><path d="M3 15l5-6 4 5 3-1 5 7 3-1 5 5" fill="none" stroke="#ccc" strokeWidth="2.500" /></svg>
        </TaskBtn>
        <TaskBtn width="w-[58px] ml-px">
          <svg width="32" height="32" viewBox="0 0 32 32"><path d="M4 18c0-8 8-11 13-8 4 2 8 3 7 8-1 6-6 9-11 9-6 0-9-4-9-9z" fill="#bcd4ea" stroke="#7a9ab8" /><circle cx="9" cy="17" r="2" fill="#3a8adf" /><circle cx="12" cy="12" r="2" fill="#e8542a" /><circle cx="18" cy="12" r="2" fill="#3fae3f" /><circle cx="11" cy="23" r="2" fill="#e8c82a" /><path d="M17 26l2-5 9-19 2 1-8 20z" fill="#e89a2a" stroke="#8f5902" strokeWidth=".8" /></svg>
        </TaskBtn>
        <TaskBtn width="w-[53px] ml-[1px]">
          <svg width="32" height="28" viewBox="0 0 32 28"><path d="M4 14c3-7 12-10 19-6l6-6 1 9-3 3c0 6-5 9-12 8-6 0-11-3-11-8z" fill="#5a5a54" stroke="#2a2a28" /><circle cx="6" cy="11" r="3.500" fill="#fff" stroke="#222" /><circle cx="6" cy="11" r="1.500" fill="#111" /><circle cx="11" cy="12" r="3" fill="#fff" stroke="#222" /><path d="M6 16l14 7M22 22l6 4" stroke="#8a7a40" strokeWidth="2" /></svg>
        </TaskBtn>
      </div>
      <div className="ml-auto h-full flex items-center text-white shrink-0">
        <span className="text-[12px] w-[33px]">EN</span>
        <span className="w-0 h-0 border-x-[4px] border-x-transparent border-b-[4px] border-b-white" />
        <div className="flex items-center gap-[8px] ml-[13px]">
          <svg width="15" height="17" viewBox="0 0 15 17"><path d="M2 1v15" stroke="#fff" strokeWidth="1.500" /><path d="M3 2h5l1 1h5l-3 3 3 3H8L7 8H3z" fill="#f4f4f4" stroke="#555" strokeWidth=".5" /></svg>
          <svg width="15" height="17" viewBox="0 0 15 17"><path d="M4 1v4M10 1v4M2 5h11v6l-3 3H5l-3-3z" fill="#fff" stroke="#444" strokeWidth=".7" /><path d="M7 14v3" stroke="#fff" strokeWidth="2" /></svg>
          <svg width="16" height="17" viewBox="0 0 16 17"><rect x="1" y="4" width="12" height="11" fill="none" stroke="#fff" /><rect x="1" y="1" width="3" height="9" fill="#fff" /><path d="M11 8l5 8H6z" fill="#f5c518" stroke="#8a6a00" strokeWidth=".5" /><path d="M11 11v2" stroke="#000" /></svg>
          <svg width="15" height="15" viewBox="0 0 15 15"><path d="M1 5h3l4-4v13l-4-4H1z" fill="#fff" stroke="#555" strokeWidth=".5" /><path d="M10 5c1 1 1 4 0 5M12 3c2 2 2 7 0 9" fill="none" stroke="#fff" /></svg>
        </div>
        <div className="w-[82px] ml-[5px] flex flex-col items-center text-[12px] leading-[16px]">
          <span>17:40</span>
          <span>25.11.2015</span>
        </div>
        <div className="w-[12px] h-full border-l border-[#777] bg-[linear-gradient(180deg,rgba(255,255,255,0.25),rgba(255,255,255,0.05))]" />
      </div>
    </div>
  );
}

export default function App() {
  return (
    <div className="relative w-[1366px] h-[768px] overflow-hidden bg-[#f0f0f0] font-['Roboto',sans-serif]">
      <MainWindow />
      <Toolbox />
      <Dock />
      <Taskbar />
    </div>
  );
}
